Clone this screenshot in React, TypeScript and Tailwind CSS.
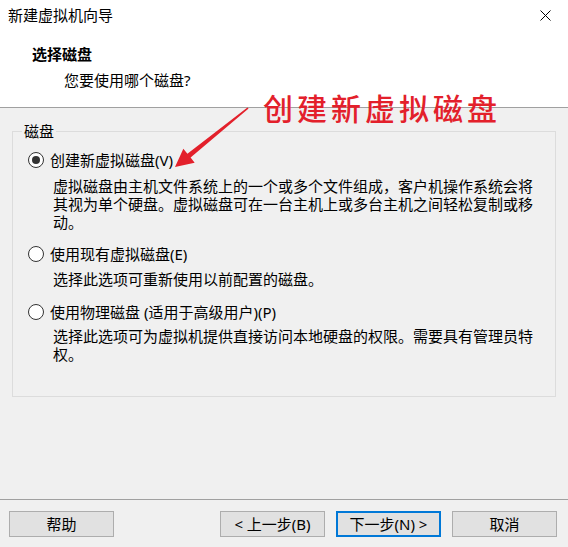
import React from "react";

const font = { fontFamily: '"Noto Sans", "Noto Sans CJK SC", sans-serif' };

function Radio({ checked }: { checked?: boolean }) {
  return (
    <span className="flex h-[16px] w-[16px] shrink-0 items-center justify-center rounded-full border border-[#333333] bg-white">
      {checked ? <span className="h-[8px] w-[8px] rounded-full bg-[#333333]" /> : null}
    </span>
  );
}

function Btn({ children, primary }: { children: React.ReactNode; primary?: boolean }) {
  return (
    <button
      className={
        primary
          ? "flex h-[26px] w-[105px] items-center justify-center border-2 border-[#0078d7] bg-[#e1e1e1] text-[15px] leading-none text-black"
          : "flex h-[26px] w-[105px] items-center justify-center border border-[#adadad] bg-[#e1e1e1] text-[15px] leading-none text-black"
      }
    >
      {children}
    </button>
  );
}

export default function App() {
  return (
    <div className="relative flex h-[547px] w-[568px] flex-col overflow-hidden bg-[#f0f0f0] text-black" style={font}>
      {/* white top area */}
      <div className="flex h-[108px] shrink-0 flex-col border-b border-[#a0a0a0] bg-white">
        <div className="flex h-[31px] items-center justify-between pl-[8px] pr-[17px]">
          <span className="text-[15px] leading-none">新建虚拟机向导</span>
          <svg width="11" height="11" viewBox="0 0 11 11">
            <path d="M0.5 0.5 L10.5 10.5 M10.5 0.5 L0.5 10.5" stroke="#000" strokeWidth="1" />
          </svg>
        </div>
        <div className="pl-[32px] pt-[14px] text-[15px] font-bold leading-[18px]">选择磁盘</div>
        <div className="pl-[64px] pt-[8px] text-[15px] leading-[18px]">您要使用哪个磁盘?</div>
      </div>

      {/* annotation */}
      <div
        className="absolute left-[263px] top-[89px] text-[30px] font-medium leading-[36px] tracking-[4px] text-[#e3202b]"
        style={{ fontFamily: '"Noto Sans CJK SC", sans-serif' }}
      >
        创建新虚拟磁盘
      </div>
      <svg className="absolute left-[170px] top-[105px]" width="85" height="70" viewBox="0 0 85 70">
        <polygon
          points="77.4,2.4 78.6,3.6 20.6,52.6 24.65,57.7 5,62 13.35,43.7 17.4,48.8"
          fill="#e3202b"
        />
      </svg>

      {/* body */}
      <div className="flex flex-1 flex-col px-[12px] pt-[14px]">
        <fieldset className="h-[275px] border border-[#dcdcdc] pl-[15px]">
          <legend className="ml-[-6px] px-[2px] text-[15px] leading-[18px]">磁盘</legend>
          <div className="mt-[10px] flex items-center gap-[6px] text-[15px] leading-[20px]">
            <Radio checked />
            <span>创建新虚拟磁盘(V)</span>
          </div>
          <div className="mt-[7px] pl-[25px] text-[15px] leading-[18px] whitespace-nowrap">
            虚拟磁盘由主机文件系统上的一个或多个文件组成，客户机操作系统会将
            <br />
            其视为单个硬盘。虚拟磁盘可在一台主机上或多台主机之间轻松复制或移
            <br />
            动。
          </div>
          <div className="mt-[13px] flex items-center gap-[6px] text-[15px] leading-[20px]">
            <Radio />
            <span>使用现有虚拟磁盘(E)</span>
          </div>
          <div className="mt-[6px] pl-[25px] text-[15px] leading-[18px] whitespace-nowrap">
            选择此选项可重新使用以前配置的磁盘。
          </div>
          <div className="mt-[14px] flex items-center gap-[6px] text-[15px] leading-[20px]">
            <Radio />
            <span>使用物理磁盘 (适用于高级用户)(P)</span>
          </div>
          <div className="mt-[5px] pl-[25px] text-[15px] leading-[18px] whitespace-nowrap">
            选择此选项可为虚拟机提供直接访问本地硬盘的权限。需要具有管理员特
            <br />
            权。
          </div>
        </fieldset>
      </div>

      {/* footer */}
      <div className="h-[48px] shrink-0 border-t border-[#a0a0a0] pt-[11px]">
        <div className="flex items-center pl-[9px] pr-[11px]">
          <Btn>帮助</Btn>
          <div className="flex-1" />
          <div className="flex gap-[11px]">
            <Btn>&lt; 上一步(B)</Btn>
            <Btn primary>下一步(N) &gt;</Btn>
            <Btn>取消</Btn>
          </div>
        </div>
      </div>
    </div>
  );
}
